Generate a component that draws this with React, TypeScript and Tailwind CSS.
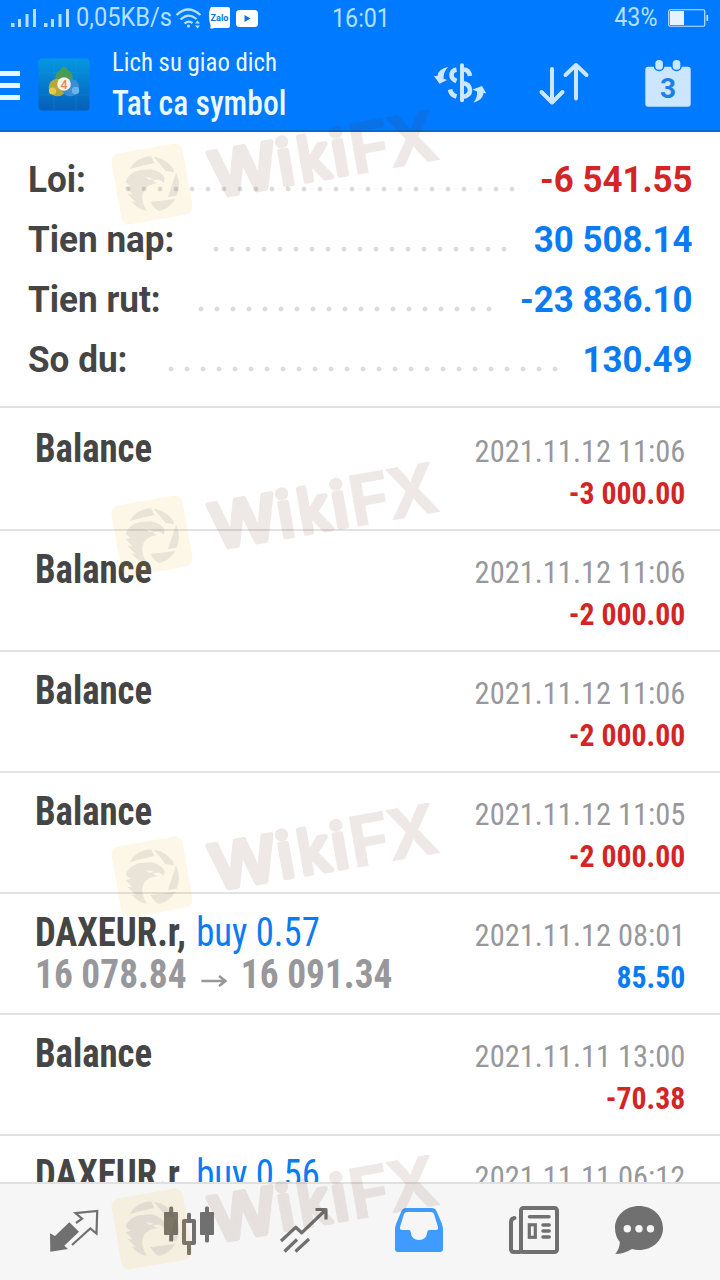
import React from "react";

type SummaryRow = { label: string; value: string; labelWidth: string; dotsWidth: string; color: string };

const summary: SummaryRow[] = [
  { label: "Loi:", value: "-6 541.55", labelWidth: "w-[91.5px]", dotsWidth: "w-[400px]", color: "text-[#d32525]" },
  { label: "Tien nap:", value: "30 508.14", labelWidth: "w-[179.5px]", dotsWidth: "w-[304px]", color: "text-[#0a7bf0]" },
  { label: "Tien rut:", value: "-23 836.10", labelWidth: "w-[164.5px]", dotsWidth: "w-[304px]", color: "text-[#0a7bf0]" },
  { label: "So du:", value: "130.49", labelWidth: "w-[134.5px]", dotsWidth: "w-[400px]", color: "text-[#0a7bf0]" },
];

type Deal = { title: string; action?: string; from?: string; to?: string; date: string; amount: string };

const deals: Deal[] = [
  { title: "Balance", date: "2021.11.12 11:06", amount: "-3 000.00" },
  { title: "Balance", date: "2021.11.12 11:06", amount: "-2 000.00" },
  { title: "Balance", date: "2021.11.12 11:06", amount: "-2 000.00" },
  { title: "Balance", date: "2021.11.12 11:05", amount: "-2 000.00" },
  { title: "DAXEUR.r,", action: "buy 0.57", from: "16 078.84", to: "16 091.34", date: "2021.11.12 08:01", amount: "85.50" },
  { title: "Balance", date: "2021.11.11 13:00", amount: "-70.38" },
  { title: "DAXEUR.r,", action: "buy 0.56", date: "2021.11.11 06:12", amount: "" },
];

const SignalBars: React.FC = () => (
  <svg width="26" height="20" viewBox="0 0 26 20" fill="#b5e0ff">
    <rect x="0" y="15" width="3.5" height="4" />
    <rect x="7" y="11" width="3" height="8" />
    <rect x="14.5" y="6" width="3" height="13" />
    <rect x="22" y="1" width="3" height="18" />
  </svg>
);

const StatusBar: React.FC = () => (
  <div className="flex h-9 items-center pl-[11px] pr-[11px] text-[25px] leading-9 text-[#b5e0ff]">
    <div className="flex w-[321px] items-center">
      <SignalBars />
      <div className="ml-[7px]">
        <SignalBars />
      </div>
      <span className="ml-[6px] w-[100px] origin-left scale-x-[0.945] whitespace-nowrap">0,05KB/s</span>
      <svg className="-ml-px" width="28" height="22" viewBox="0 0 28 22" fill="none" stroke="#b5e0ff" strokeWidth="2.2">
        <path d="M1.5 8Q13 -3 25.5 8" />
        <path d="M5.5 12.5Q13.5 5 21.5 12" />
        <path d="M9.5 16.5Q13.5 13 17.5 16" />
        <circle cx="13.5" cy="19" r="1.6" fill="#b5e0ff" stroke="none" />
        <path d="M20 16.5l2.5-3 2.5 3zM20 18.5l2.5 3 2.5-3z" fill="#b5e0ff" stroke="none" />
      </svg>
      <svg className="ml-[6px]" width="21" height="22" viewBox="0 0 21 22">
        <path d="M2 0H19Q21 0 21 2V19Q21 21 19 21H5Q3 22 1 21Q2 20 1.5 18Q0 14 0 9Q0 3 2 0Z" fill="#fff" />
        <text x="1.5" y="13.5" fontSize="9.5" fontWeight="700" fill="#0a76d8" textLength="18" lengthAdjust="spacingAndGlyphs">Zalo</text>
      </svg>
      <svg className="ml-[6px]" width="22" height="17" viewBox="0 0 22 17">
        <rect width="22" height="17" rx="3.5" fill="#fff" />
        <path d="M8.5 5L14.5 8.5L8.5 12Z" fill="#0a76d8" />
      </svg>
    </div>
    <span className="mt-0.5 origin-left scale-x-[0.93]">16:01</span>
    <span className="ml-auto origin-right scale-x-[0.93]">43%</span>
    <svg className="ml-[11px]" width="41" height="18" viewBox="0 0 41 18">
      <rect x="0.75" y="0.75" width="36" height="16.5" rx="1.5" fill="none" stroke="#c4e2fb" strokeWidth="1.2" />
      <rect x="2" y="2" width="14" height="14" fill="#e6f2ff" />
      <rect x="38.5" y="6" width="1.6" height="6" fill="#c4e2fb" />
    </svg>
  </div>
);

const AppLogo: React.FC = () => (
  <svg width="52" height="53" viewBox="0 0 52 53">
    <defs>
      <linearGradient id="logoBg" x1="0" y1="0" x2="0" y2="1">
        <stop offset="0" stopColor="#0598e2" />
        <stop offset="1" stopColor="#065fb8" />
      </linearGradient>
    </defs>
    <rect x="0.5" y="0.5" width="51" height="52" rx="4" fill="url(#logoBg)" />
    <path d="M16 1V52M38 1V52M1 15H51M1 37H51" stroke="#2aa9e4" strokeWidth="0.6" opacity="0.4" />
    <circle cx="26" cy="20" r="8.8" fill="#4d9a57" />
    <circle cx="19.5" cy="29.5" r="8.8" fill="#b5a83a" />
    <circle cx="32.5" cy="29.5" r="8.8" fill="#3a8ed2" />
    <circle cx="26" cy="12.5" r="3.6" fill="#3fa05c" />
    <circle cx="14.5" cy="33" r="3.6" fill="#e0cd45" />
    <circle cx="37.5" cy="32.5" r="3.8" fill="#6bb5ea" />
    <circle cx="26" cy="26" r="6.8" fill="#f7f3ea" />
    <text x="26" y="30.5" fontSize="12.5" fontWeight="500" textAnchor="middle" fill="#ef8450">4</text>
  </svg>
);

const Header: React.FC = () => (
  <div className="flex h-[96px] items-start border-b-2 border-[#0b68cc]">
    <div className="mt-[35px] flex w-5 flex-col gap-[7px]">
      <span className="h-[5px] bg-[#e8f6ff]" />
      <span className="h-[5px] bg-[#e8f6ff]" />
      <span className="h-[5px] bg-[#e8f6ff]" />
    </div>
    <div className="ml-[18px] mt-[22px]">
      <AppLogo />
    </div>
    <div className="ml-[22px] mt-[10px] w-[321px] whitespace-nowrap font-['Roboto_Condensed','Roboto',sans-serif] text-[#eaf8ff]">
      <div className="origin-left scale-x-[0.954] text-[26px] leading-8">Lich su giao dich</div>
      <div className="mt-1.5 origin-left scale-x-[0.905] text-[35px] font-medium leading-10">Tat ca symbol</div>
    </div>
    <svg className="mt-[25px]" width="54" height="44" viewBox="0 0 54 44" fill="none" stroke="#cce6ff" strokeWidth="4">
      <path d="M29 4.3V39.3" strokeLinecap="round" />
      <path d="M23.5 8.5Q18.5 9.5 18.5 14Q18.5 18 23.5 20" strokeWidth="4.6" />
      <path d="M30 8.5Q36 8.5 37 15" strokeWidth="4.6" />
      <path d="M29 22Q37 23 37 29Q37 35 29 36" strokeWidth="4.6" />
      <path d="M17 28.5Q18 34 23.5 35.5" strokeWidth="4.6" />
      <path d="M15.3 6Q5 8 4.5 15L1 15L6.5 22.7L14 19L10.5 17.5Q10.5 10 15.3 6Z" fill="#cce6ff" stroke="none" />
      <path d="M40.3 41.7Q50 39 50.5 32L53.3 32.5L49 25L39.5 28.5L44 30.5Q44.5 37 40.3 41.7Z" fill="#cce6ff" stroke="none" />
    </svg>
    <svg className="ml-[51px] mt-[25px]" width="52" height="46" viewBox="0 0 52 46" fill="none" stroke="#cce6ff" strokeWidth="4" strokeLinecap="round" strokeLinejoin="round">
      <path d="M14 8V41M3.5 31L14 41.5L24.5 31" />
      <path d="M38 37.5V4M27.5 14L38 4L48.5 14" />
    </svg>
    <svg className="ml-[54px] mt-[23px]" width="48" height="49" viewBox="0 0 48 49">
      <rect x="1.3" y="7.7" width="45.4" height="40" rx="3" fill="#cce6ff" />
      <rect x="11.3" y="1" width="7.6" height="9.8" rx="3.5" fill="#cce6ff" stroke="#007aff" strokeWidth="3" paintOrder="stroke" />
      <rect x="28.7" y="1" width="7.6" height="9.8" rx="3.5" fill="#cce6ff" stroke="#007aff" strokeWidth="3" paintOrder="stroke" />
      <text x="24" y="39" fontSize="28" fontWeight="700" textAnchor="middle" fill="#1a80e8">3</text>
    </svg>
  </div>
);

const Summary: React.FC = () => (
  <div className="border-b-2 border-[#e2e2e2] px-7 pt-[18px] pb-[16px] text-[36px] font-bold">
    {summary.map((row) => (
      <div key={row.label} className="flex h-15 items-center whitespace-nowrap">
        <span className={`${row.labelWidth} origin-left scale-x-[0.975] text-[#454545]`}>{row.label}</span>
        <span
          className={`${row.dotsWidth} mt-[18px] h-4 bg-[radial-gradient(circle,#dcdcdc_2px,transparent_2.8px)] bg-[length:16px_16px]`}
        />
        <span className={`flex flex-1 origin-right scale-x-[0.968] justify-end ${row.color}`}>{row.value}</span>
      </div>
    ))}
  </div>
);

const DealRow: React.FC<{ deal: Deal }> = ({ deal }) => (
  <div className="flex h-[121px] shrink-0 justify-between border-b-2 border-[#e2e2e2] px-[35px] whitespace-nowrap font-['Roboto_Condensed','Roboto',sans-serif]">
    <div className="pt-[18px] text-[40px] leading-[42px]">
      <div className="origin-left scale-x-[0.918]">
        <span className="font-bold text-[#454545]">{deal.title}</span>
        {deal.action && <span className="ml-0.5 text-[#0a7bf0]"> {deal.action}</span>}
      </div>
      {deal.from && (
        <div className="flex origin-left scale-x-[0.934] items-center font-bold text-[#98989c]">
          <span>{deal.from}</span>
          <svg className="ml-[16px] mr-[14px] mt-3" width="28" height="12" viewBox="0 0 28 12" fill="none" stroke="#98989c" strokeWidth="2.6">
            <path d="M0 6H26M19 1L26 6L19 11" />
          </svg>
          <span>{deal.to}</span>
        </div>
      )}
    </div>
    <div className="pt-[20px] text-right text-[32px] leading-[42px]">
      <div className="origin-right scale-x-[0.952] text-[#98989c]">{deal.date}</div>
      <div className={`origin-right scale-x-[0.93] font-bold ${deal.amount.startsWith("-") ? "text-[#d32525]" : "text-[#0a7bf0]"}`}>
        {deal.amount}
      </div>
    </div>
  </div>
);

const TabBar: React.FC = () => (
  <div className="flex h-[98px] shrink-0 border-t-2 border-[#e0e0e0] bg-[#f6f6f6] pl-[16.5px] pt-[20px]">
    <div className="flex w-[115px] justify-center">
      <svg width="52" height="52" viewBox="0 0 52 52">
        <path d="M2 29.3L7 32L21.3 18.3L31 27.7L16.3 41.7L20 45L2.3 47.8Z" fill="#707070" />
        <path d="M28 19L34 14.7L27.5 9.2L49.2 7L48.5 29.5L42.3 24.5L24 41" fill="none" stroke="#707070" strokeWidth="2.2" />
      </svg>
    </div>
    <div className="flex w-[115px] justify-center">
      <svg width="52" height="52" viewBox="0 0 52 52" fill="#707070">
        <rect x="1" y="8" width="14" height="23" rx="1" />
        <rect x="6.2" y="2.5" width="4" height="35" rx="1.5" />
        <rect x="21" y="17" width="10" height="22" fill="none" stroke="#707070" strokeWidth="4" strokeLinejoin="round" />
        <rect x="24" y="8.7" width="4" height="8" rx="1.5" />
        <rect x="24" y="39" width="4" height="12" rx="1" />
        <rect x="37" y="8" width="14" height="23" rx="1" />
        <rect x="42" y="2.5" width="4" height="36" rx="1.5" />
      </svg>
    </div>
    <div className="flex w-[115px] justify-center">
      <svg width="52" height="52" viewBox="0 0 52 52" fill="none" stroke="#707070" strokeWidth="3.2" strokeLinejoin="round">
        <path d="M3 37L17.7 23.3L23.7 28.8L47.5 6M37.5 5.5H48V15.5M6.5 47.5L19 35.5M17.5 47.5L31 35" />
      </svg>
    </div>
    <div className="flex w-[115px] justify-center">
      <svg width="52" height="52" viewBox="0 0 52 52" fill="#3f9bff">
        <path
          fillRule="evenodd"
          d="M13 4H39Q42 4 43.5 7L49 20Q50 23 50 26V45Q50 48 47 48H5Q2 48 2 45V26Q2 23 3 20L8.5 7Q10 4 13 4ZM14 8Q12 8 11 10L7 23Q6.5 26 9 26H15.5Q17.7 26 17.7 28Q18.5 36 26 36Q33.5 36 34.3 28Q34.3 26 36.5 26H43Q45.5 26 45 23L41 10Q40 8 38 8Z"
        />
      </svg>
    </div>
    <div className="flex w-[115px] justify-center">
      <svg width="52" height="52" viewBox="0 0 52 52" fill="none" stroke="#707070" strokeWidth="4" strokeLinecap="round">
        <rect x="13" y="4" width="36" height="44" rx="2.5" />
        <path d="M6.5 14Q3 14.5 3 18V45Q3 48 6 48H12" />
        <path d="M21.5 12.7H41M35 21H41.2M35 27H41.2M35 33H41.2" strokeWidth="3.5" />
        <rect x="21.3" y="20.8" width="6" height="12.5" strokeWidth="3.2" />
      </svg>
    </div>
    <div className="flex w-[95px] justify-center">
      <svg width="52" height="52" viewBox="0 0 52 52">
        <path d="M26 2C39 2 50 11 50 24C50 37 39 46 26 46Q22 46 19 45Q11 50 2.3 50Q7 44 6.8 38Q2 32 2 24C2 11 13 2 26 2Z" fill="#707070" />
        <circle cx="14.3" cy="24.7" r="3.7" fill="#f6f6f6" />
        <circle cx="26" cy="24.7" r="3.7" fill="#f6f6f6" />
        <circle cx="37.5" cy="24.7" r="3.7" fill="#f6f6f6" />
      </svg>
    </div>
  </div>
);

const Watermark: React.FC<{ top: string }> = ({ top }) => (
  <svg className={`pointer-events-none absolute left-[102px] ${top}`} width="350" height="124" viewBox="-50 -74 350 124">
    <g transform="rotate(-10)">
      <rect x="-36" y="-36" width="72" height="72" rx="8" fill="#eeb416" opacity="0.1" />
      <g
        fill="#61261e"
        opacity="0.1"
        stroke="#61261e"
        strokeWidth="5"
        strokeLinejoin="round"
        fontFamily="Inter, sans-serif"
        fontWeight="500"
        fontSize="62"
      >
        <text transform="translate(59 24) scale(1.08 1)">W</text>
        <text transform="translate(127 24)">i</text>
        <text transform="translate(148 24) scale(0.9 1)">k</text>
        <text transform="translate(182 24)">i</text>
        <text transform="translate(200 26)" fontSize="70" fontWeight="700" strokeWidth="0.5">F</text>
        <text transform="translate(238 26)" fontSize="70" fontWeight="700" strokeWidth="0.5">X</text>
      </g>
    </g>
    {/* eagle head inside a shutter ring */}
    <g transform="scale(0.3333) translate(-155 -244)" fill="#4a3a60" opacity="0.1">
      <path d="M88 200Q108 163 152 161L162 181L112 192Z" />
      <path d="M161 162Q196 168 219 198L221 209L196 205Z" />
      <path d="M227 210Q244 244 229 279L203 283Z" />
      <path d="M150 298L225 289Q207 318 177 325Q164 322 150 298Z" />
      <path
        fillRule="evenodd"
        d="M76 238Q84 212 116 203L150 200Q180 204 193 226L191 240L178 231L158 232Q162 239 172 241Q146 243 131 262Q121 280 130 306L140 325Q112 319 94 297L106 297L82 274L96 275L76 253L91 250ZM134 222L162 228L148 232Z"
      />
    </g>
  </svg>
);

const App: React.FC = () => {
  return (
    <div className="relative flex h-[1280px] w-[720px] flex-col overflow-hidden bg-white font-['Roboto',sans-serif]">
      <div className="h-[132px] shrink-0 bg-[#007aff]">
        <StatusBar />
        <Header />
      </div>
      <Summary />
      <div className="flex min-h-0 flex-1 flex-col overflow-hidden pt-0.5">
        {deals.map((deal, i) => (
          <DealRow key={i} deal={deal} />
        ))}
      </div>
      <TabBar />
      <Watermark top="top-[110px]" />
      <Watermark top="top-[462px]" />
      <Watermark top="top-[803px]" />
      <Watermark top="top-[1155px]" />
    </div>
  );
};

export default App;
